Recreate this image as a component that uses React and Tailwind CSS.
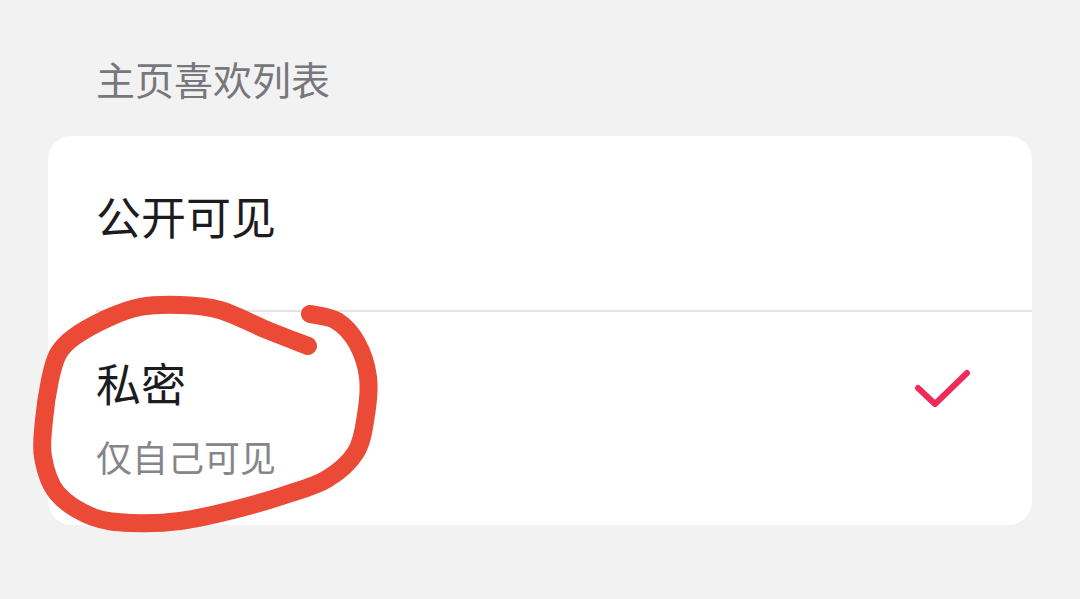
const cjk = { fontFamily: '"Noto Sans CJK SC", "Noto Sans", sans-serif' }

// hand drawn circle, points traced off the picture
const pts = [[308,346],[267,330],[220,310],[180,305],[140,307],[108,318],[74,337],[58,354],[50,380],[44,420],[43,457],[57,493],[93,517],[133,523],[180,521],[233,510],[285,495],[327,479],[356,452],[366,415],[368,377],[357,343],[337,321],[310,314]]

// catmull-rom so the line goes through every traced point
function smooth(p){
  let d = `M${p[0][0]} ${p[0][1]}`
  for(let i=0;i<p.length-1;i++){
    const a = p[i-1] || p[i], b = p[i], c = p[i+1], e = p[i+2] || c
    const c1x = b[0]+(c[0]-a[0])/6, c1y = b[1]+(c[1]-a[1])/6
    const c2x = c[0]-(e[0]-b[0])/6, c2y = c[1]-(e[1]-b[1])/6
    d += ` C${c1x} ${c1y} ${c2x} ${c2y} ${c[0]} ${c[1]}`
  }
  return d
}

export default function App(){
  return (
    <div className="relative w-[1080px] h-[599px] overflow-hidden bg-[#f2f2f2] pt-[52px] px-[48px]" style={cjk}>
      <div className="pl-[48px] h-[84px] text-[39px] leading-[52px] text-[#77777c]">主页喜欢列表</div>
      <div className="bg-white rounded-[24px] overflow-hidden">
        <div className="h-[174px] pl-[48px] flex items-center">
          <div className="text-[45px] leading-[60px] text-[#1c1c20] relative -top-[7px]">公开可见</div>
        </div>
        <div className="ml-[48px] h-[2px] bg-[#e4e4e4]"></div>
        <div className="h-[213px] pl-[48px] pr-[60px] flex justify-between">
          <div className="pt-[41px]">
            <div className="text-[45px] leading-[60px] text-[#1c1c20]">私密</div>
            <div className="text-[36px] leading-[50px] mt-[18px] text-[#85858a]">仅自己可见</div>
          </div>
          <svg width="58" height="44" viewBox="0 0 58 44" fill="none" className="mt-[55px]">
            <path d="M4 21 L21 37 L53 6" stroke="#ee2b5b" strokeWidth="6" strokeLinecap="round" strokeLinejoin="round"/>
          </svg>
        </div>
      </div>
      <svg width="1080" height="599" viewBox="0 0 1080 599" fill="none" className="absolute left-0 top-0 pointer-events-none">
        <path d={smooth(pts)} stroke="#ea4a36" strokeWidth="18" strokeLinecap="round" strokeLinejoin="round"/>
      </svg>
    </div>
  )
}
